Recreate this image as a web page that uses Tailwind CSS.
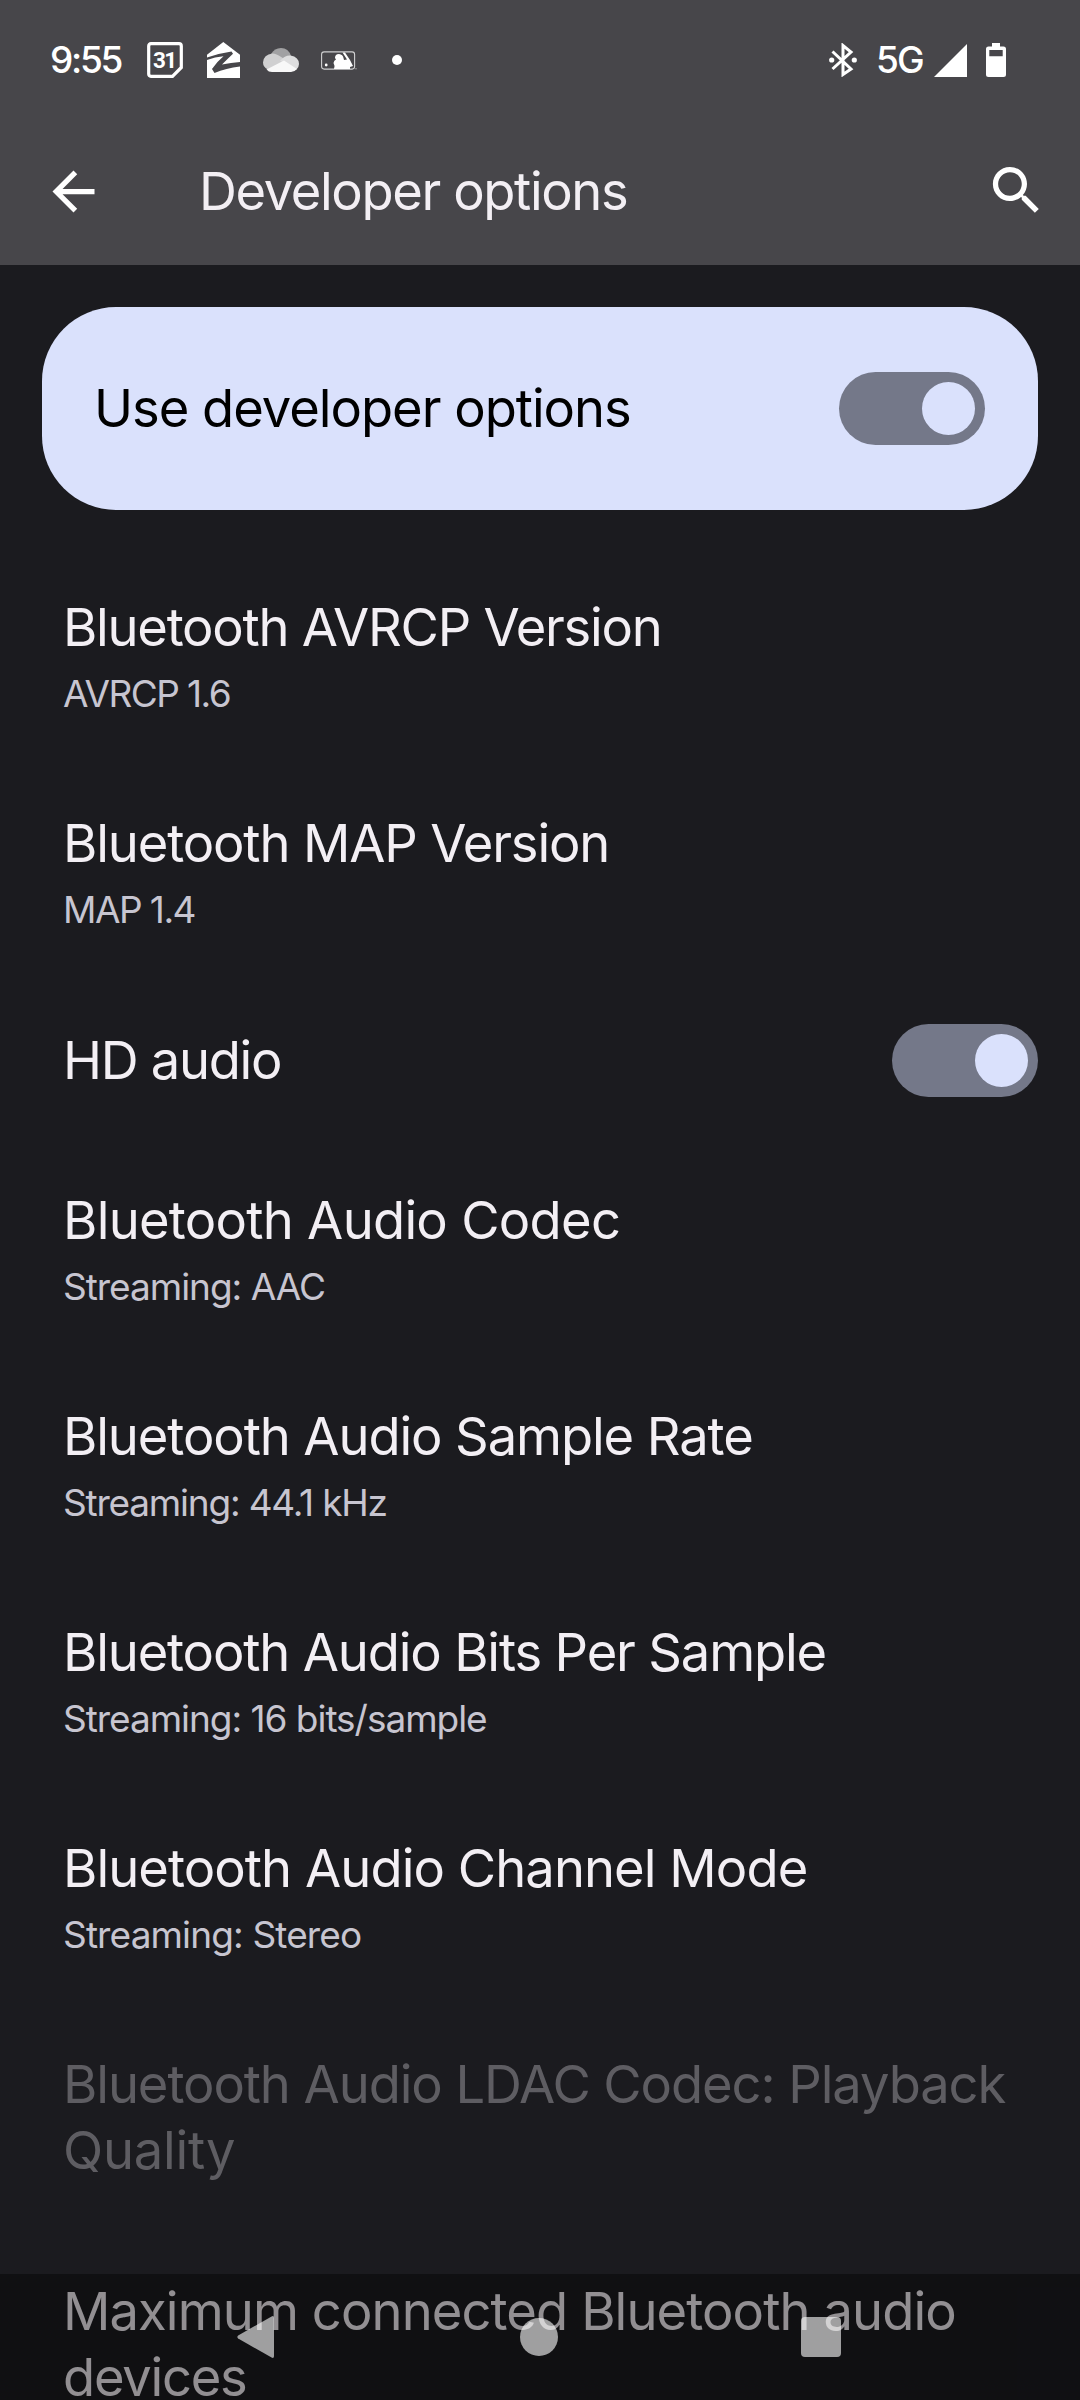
<!DOCTYPE html>
<html lang="en">
<head>
<meta charset="utf-8">
<title>Developer options</title>
<script src="https://cdn.jsdelivr.net/npm/@tailwindcss/browser@4"></script>
</head>
<body class="bg-[#1b1b1f]">
<div class="relative w-[1080px] h-[2400px] overflow-hidden bg-[#1b1b1f] font-['Inter',sans-serif] text-[52.5px] leading-[66px] text-[#f3eff4] whitespace-nowrap">
  <header class="h-[265px] bg-[#47464a]">
    <!-- Status bar -->
    <div class="flex h-[120px] items-center justify-between pl-[50px] pr-[74px] text-white">
      <div class="flex items-center">
        <span class="w-[97px] text-[37px] font-medium leading-[46px] tracking-[-2.3px]">9:55</span>
        <svg class="h-9 w-9" viewBox="0 0 36 36" fill="none"><path d="M4 1.700H32Q34.300 1.700 34.300 4V25.500L25.500 34.300H4Q1.700 34.300 1.700 32V4Q1.700 1.700 4 1.700Z" stroke="#fff" stroke-width="3.200"/><text x="17.300" y="25.500" text-anchor="middle" fill="#fff" font-family="Roboto, sans-serif" font-weight="700" font-size="22.500" letter-spacing="-1.500">31</text></svg>
        <svg class="ml-[24px] h-9 w-[33px]" viewBox="0 0 33 36" fill="#fff"><path d="M16.300 0L33 12.800V20Q24 20.500 15 22.500Q20.500 17 26 11.800L24.500 9.500Q12 11.300 0 15.500V12.800Z"/><path d="M0 18Q8 15 16.500 14.200Q10 19.500 5 27L7.500 31Q19 26 33 24.500V36H0Z"/></svg>
        <svg class="ml-[23px] h-6 w-9" viewBox="0 0 36 24"><path d="M8 6Q11.500 0 18 0Q25.500 0 28 8L18 13Z" fill="#a1a1a3"/><path d="M9.500 5.500Q13 5.500 19 9.500L24.500 13L5 21.500Q0 19 0 14.500Q0.500 6.500 9.500 5.500Z" fill="#d0d0d1"/><path d="M19 11Q22.500 7 27.500 7.500Q36 9 36 16Q36 19 33.500 21.500L17 12.500Z" fill="#dededf"/><path d="M3.500 21.500L21 12.500L34 21Q31.500 24 28 24H9Q5.500 24 3.500 21.500Z" fill="#f8f8f8"/></svg>
        <svg class="ml-[22px] h-[19px] w-9" viewBox="0 0 36 19"><rect x=".6" y=".9" width="33" height="17.200" rx="2.500" fill="none" stroke="#d0d0d1" stroke-width="1.100"/><circle cx="5.200" cy="14" r="1.400" fill="#fff"/><path d="M14 7Q14 3 18 3Q22 3.500 22.500 7L23 9L26 8.500L21.500 1.500H24L29 9L32 15L29 16V18H13Q14 14 12.500 12Q13 9 15 8.500Z" fill="#fff"/><circle cx="35" cy="17.700" r=".7" fill="#aaa"/></svg>
        <span class="ml-[35px] h-[10px] w-[10px] rounded-full bg-white"></span>
      </div>
      <div class="flex items-center">
        <svg class="h-[34px] w-7" viewBox="0 0 28 34" fill="none"><path d="M3.500 8.500L22 26L14 31.500V2.500L22 9L3.500 26" stroke="#fff" stroke-width="3"/><circle cx="2.700" cy="17" r="2.600" fill="#fff"/><circle cx="25.300" cy="17" r="2.600" fill="#fff"/></svg>
        <span class="ml-[19px] w-[58px] text-[37px] font-medium leading-[46px] tracking-[-1.8px]">5G</span>
        <svg class="h-[33px] w-[33px]" viewBox="0 0 33 33"><path d="M33 0V33H0Z" fill="#fff"/></svg>
        <svg class="ml-[19px] h-[34px] w-5" viewBox="0 0 20 34" fill="#fff" fill-rule="evenodd"><path d="M6 0H14V3.500H17.500Q20 3.500 20 6V31.500Q20 34 17.500 34H2.500Q0 34 0 31.500V6Q0 3.500 2.500 3.500H6ZM3.300 7V13.200H16.700V7Z"/></svg>
      </div>
    </div>
    <!-- App bar -->
    <div class="flex h-[142px] items-center pl-[42px] pr-[32px]">
      <svg class="h-[63px] w-[63px]" viewBox="0 0 24 24" fill="#fff"><path d="M20 11H7.830l5.590-5.590L12 4l-8 8 8 8 1.410-1.410L7.830 13H20v-2z"/></svg>
      <h1 class="ml-[94px] flex-1 tracking-[-1.38px]">Developer options</h1>
      <svg class="mb-[2px] h-[63px] w-[63px]" viewBox="0 0 24 24" fill="#fff"><path d="M15.500 14h-.79l-.28-.27C15.410 12.590 16 11.110 16 9.500 16 5.910 13.090 3 9.500 3S3 5.910 3 9.500 5.910 16 9.500 16c1.610 0 3.090-.59 4.230-1.570l.27.28v.79l5 4.990L20.490 19l-4.990-5zm-6 0C7.010 14 5 11.990 5 9.500S7.010 5 9.500 5 14 7.010 14 9.500 11.990 14 9.500 14z"/></svg>
    </div>
  </header>

  <main>
    <section class="mx-[42px] mt-[42px] flex h-[203px] items-center justify-between rounded-[74px] bg-[#dae1fc] pl-[52px] pr-[53px] text-black">
      <span class="pb-[2px] tracking-[-1.02px]">Use developer options</span>
      <span class="flex h-[73px] w-[146px] items-center justify-end rounded-full bg-[#747889] pr-[10px]"><span class="h-[53px] w-[53px] rounded-full bg-[#dae1fc]"></span></span>
    </section>

    <ul class="mt-[42px]">
      <li class="h-[216px] px-[63px] py-[42px]">
        <p class="tracking-[-1.26px]">Bluetooth AVRCP Version</p>
        <p class="pt-px text-[37px] tracking-[-1.56px] text-[#c7c5d0]">AVRCP 1.6</p>
      </li>
      <li class="h-[216px] px-[63px] py-[42px]">
        <p class="tracking-[-1.14px]">Bluetooth MAP Version</p>
        <p class="pt-px text-[37px] tracking-[-1.53px] text-[#c7c5d0]">MAP 1.4</p>
      </li>
      <li class="flex h-[161px] items-center justify-between pb-[8px] pl-[63px] pr-[42px]">
        <p class="pb-[2px] tracking-[-1.3px]">HD audio</p>
        <span class="flex h-[73px] w-[146px] items-center justify-end rounded-full bg-[#747889] pr-[10px]"><span class="h-[53px] w-[53px] rounded-full bg-[#dae1fc]"></span></span>
      </li>
      <li class="h-[216px] px-[63px] py-[42px]">
        <p class="tracking-[-.72px]">Bluetooth Audio Codec</p>
        <p class="pt-px text-[37px] tracking-[-1.02px] text-[#c7c5d0]">Streaming: AAC</p>
      </li>
      <li class="h-[216px] px-[63px] py-[42px]">
        <p class="tracking-[-1.1px]">Bluetooth Audio Sample Rate</p>
        <p class="pt-px text-[37px] tracking-[-1.2px] text-[#c7c5d0]">Streaming: 44.1 kHz</p>
      </li>
      <li class="h-[216px] px-[63px] py-[42px]">
        <p class="tracking-[-1.16px]">Bluetooth Audio Bits Per Sample</p>
        <p class="pt-px text-[37px] tracking-[-1.03px] text-[#c7c5d0]">Streaming: 16 bits/sample</p>
      </li>
      <li class="h-[216px] px-[63px] py-[42px]">
        <p class="tracking-[-.93px]">Bluetooth Audio Channel Mode</p>
        <p class="pt-px text-[37px] tracking-[-.86px] text-[#c7c5d0]">Streaming: Stereo</p>
      </li>
      <li class="h-[227px] px-[63px] pt-[42px] text-[#5e5d62]">
        <p class="tracking-[-1.08px]">Bluetooth Audio LDAC Codec: Playback<br><span class="tracking-[-.22px]">Quality</span></p>
      </li>
      <li class="px-[63px] pt-[42px]">
        <p class="tracking-[-.9px]">Maximum connected Bluetooth audio<br><span class="tracking-[-1.26px]">devices</span></p>
      </li>
    </ul>
  </main>

  <!-- Translucent navigation bar over the list -->
  <nav class="absolute inset-x-0 bottom-0 flex h-[126px] items-center justify-between bg-black/40 pl-[237px] pr-[239px]">
    <svg class="h-[42px] w-[37px]" viewBox="0 0 38 42" preserveAspectRatio="none"><path d="M35.500 .4Q38 -.6 38 2V40Q38 42.600 35.500 41.600L1.200 22.600Q-.5 21 1.200 19.400Z" fill="#fff" fill-opacity=".6"/></svg>
    <span class="ml-[3px] h-[38px] w-[38px] rounded-full bg-white/60"></span>
    <span class="h-10 w-10 rounded-[4px] bg-white/60"></span>
  </nav>
</div>
</body>
</html>
